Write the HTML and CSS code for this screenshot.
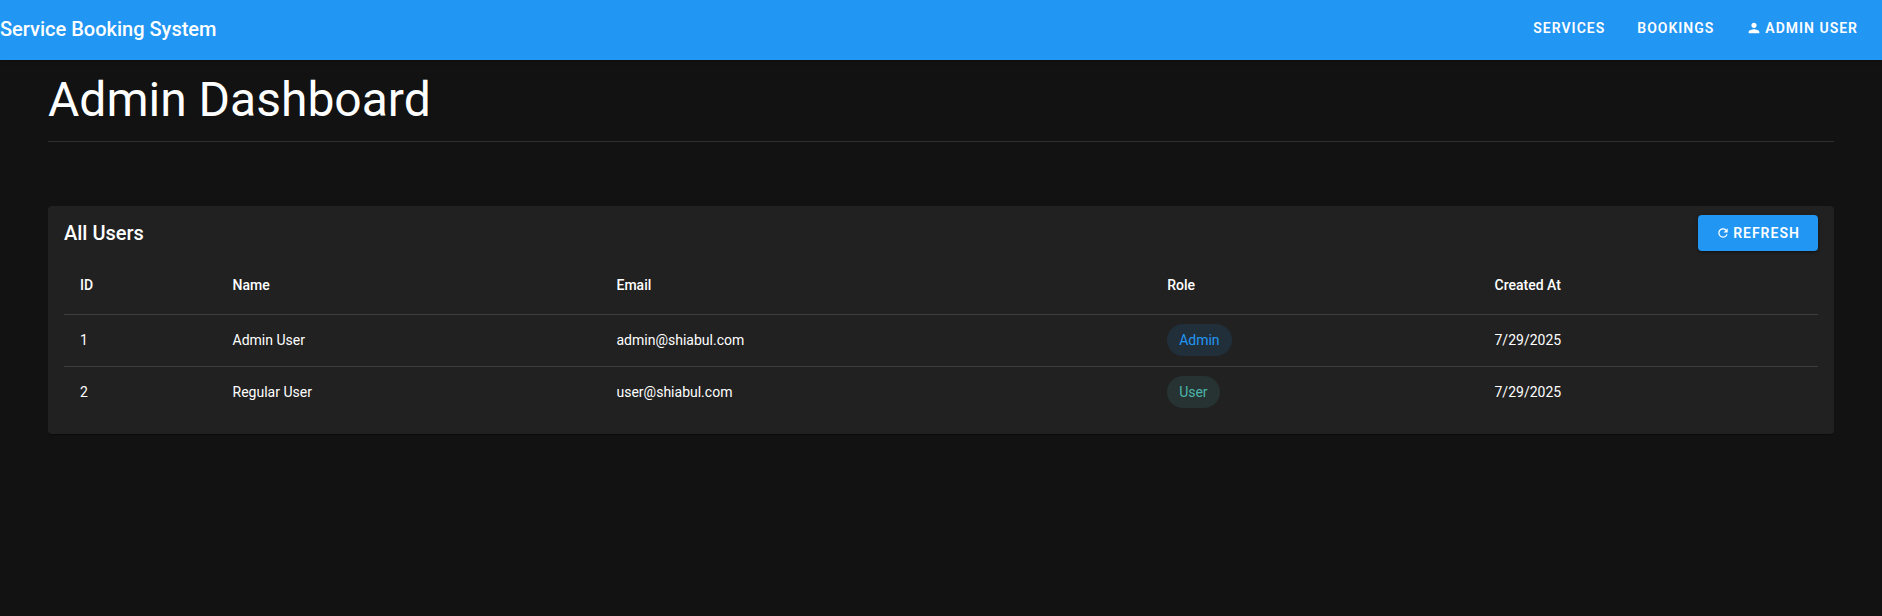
FILE: index.html
```html
<!DOCTYPE html>
<html lang="en">
<head>
<meta charset="utf-8">
<title>Admin Dashboard</title>
<link rel="stylesheet" href="styles.css">
</head>
<body>
<header class="appbar">
  <div class="brand">Service Booking System</div>
  <nav class="nav">
    <a class="nav-link">Services</a>
    <a class="nav-link">Bookings</a>
    <a class="nav-link nav-user">
      <svg class="icon" viewBox="0 0 24 24"><path d="M12 12c2.21 0 4-1.79 4-4s-1.79-4-4-4-4 1.79-4 4 1.79 4 4 4zm0 2c-2.67 0-8 1.34-8 4v2h16v-2c0-2.66-5.33-4-8-4z"/></svg>
      Admin User
    </a>
  </nav>
</header>
<main class="container">
  <h1 class="page-title">Admin Dashboard</h1>
  <section class="card">
    <div class="card-head">
      <h2 class="card-title">All Users</h2>
      <button class="btn">
        <svg class="icon" viewBox="0 0 24 24"><path d="M17.65 6.35C16.2 4.9 14.21 4 12 4c-4.42 0-7.99 3.58-7.99 8s3.57 8 7.99 8c3.73 0 6.84-2.55 7.73-6h-2.08c-.82 2.33-3.04 4-5.65 4-3.31 0-6-2.69-6-6s2.69-6 6-6c1.66 0 3.14.69 4.22 1.78L13 11h7V4l-2.35 2.35z"/></svg>
        Refresh
      </button>
    </div>
    <table class="table">
      <colgroup>
        <col class="col-id"><col class="col-name"><col class="col-email"><col class="col-role"><col class="col-date">
      </colgroup>
      <thead>
        <tr><th>ID</th><th>Name</th><th>Email</th><th>Role</th><th>Created At</th></tr>
      </thead>
      <tbody>
        <tr><td>1</td><td>Admin User</td><td>admin@shiabul.com</td><td><span class="chip chip-admin">Admin</span></td><td>7/29/2025</td></tr>
        <tr><td>2</td><td>Regular User</td><td>user@shiabul.com</td><td><span class="chip chip-user">User</span></td><td>7/29/2025</td></tr>
      </tbody>
    </table>
  </section>
</main>
</body>
</html>
```

FILE: styles.css
```css
* { box-sizing: border-box; }
html, body { margin: 0; height: 100%; }
body {
  background: #121212;
  color: #fff;
  font-family: Roboto, "Liberation Sans", sans-serif;
  font-size: 14px;
  overflow: hidden;
}
.appbar {
  height: 60px;
  background: #2196f3;
  display: flex;
  align-items: center;
  justify-content: space-between;
  padding-right: 16px;
  box-shadow: 0 2px 4px rgba(0,0,0,.2);
}
.brand { font-size: 20px; font-weight: 500; line-height: 1.6; margin-top: -2px; }
.nav { display: flex; align-items: center; gap: 16px; margin-top: -4px; }
.nav-link {
  display: flex;
  align-items: center;
  gap: 3px;
  padding: 6px 8px;
  font-size: 14px;
  font-weight: 600;
  line-height: 24px;
  letter-spacing: 1px;
  text-transform: uppercase;
}
.icon { width: 14px; height: 14px; fill: #fff; flex: none; }
.nav-user .icon { width: 16px; height: 16px; }
.container { padding: 0 48px; }
.page-title {
  margin: 0;
  font-size: 48px;
  font-weight: 400;
  line-height: 1.167;
  padding: 12px 0 18px;
  height: 82px;
  border-bottom: 1px solid #2e2e2e;
}
.card {
  margin-top: 64px;
  background: #212121;
  border-radius: 4px;
  padding: 9px 16px 16px;
  box-shadow: 0 2px 1px -1px rgba(0,0,0,.2), 0 1px 1px rgba(0,0,0,.14);
}
.card-head { display: flex; align-items: center; justify-content: space-between; }
.card-title { margin: 0; font-size: 20px; font-weight: 500; line-height: 1.6; }
.btn {
  width: 120px;
  height: 36px;
  display: flex;
  align-items: center;
  justify-content: center;
  gap: 3px;
  border: 0;
  border-radius: 4px;
  background: #2196f3;
  color: #fff;
  font: 600 14px/24px Roboto, "Liberation Sans", sans-serif;
  letter-spacing: 1px;
  text-transform: uppercase;
  box-shadow: 0 3px 1px -2px rgba(0,0,0,.2), 0 2px 2px rgba(0,0,0,.14), 0 1px 5px rgba(0,0,0,.12);
}
.table { width: 100%; border-collapse: collapse; table-layout: fixed; margin-top: 5px; }
.col-id { width: 151px; }
.col-name { width: 380px; }
.col-email { width: 545px; }
.col-role { width: 324px; }
.col-date { width: 336px; }
th, td { padding: 0 16px; text-align: left; font-size: 14px; }
th { font-weight: 500; height: 58px; border-bottom: 1px solid #3d3d3d; }
td { font-weight: 400; height: 52px; }
tbody tr:first-child td { border-bottom: 1px solid #3d3d3d; }
.chip {
  display: inline-flex;
  align-items: center;
  height: 32px;
  padding: 0 12px;
  border-radius: 16px;
  vertical-align: middle;
}
.chip-admin { color: #2196f3; background: rgba(33,150,243,.12); }
.chip-user { color: #4db6ac; background: rgba(77,182,172,.12); }
```
